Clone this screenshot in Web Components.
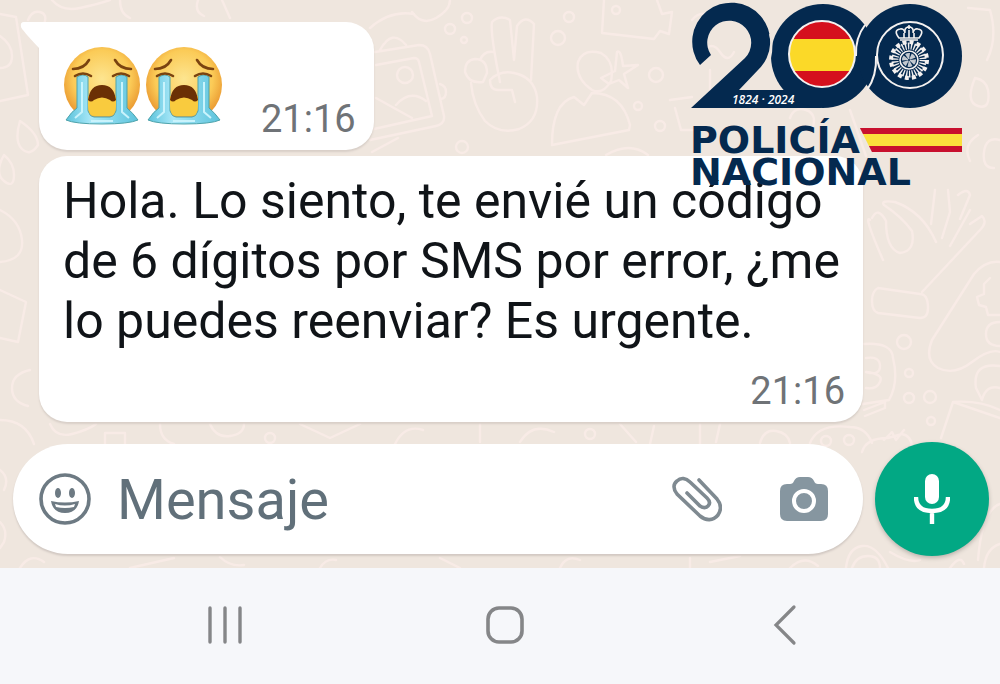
<!DOCTYPE html>
<html lang="es">
<head>
<meta charset="utf-8">
<meta name="viewport" content="width=device-width, initial-scale=1">
<title>Chat</title>
<style>
  body {
    margin: 0;
    font-family: Roboto, "Liberation Sans", sans-serif;
    background: #f6f7fa;
  }
</style>
</head>
<body>
<chat-screen>
  <chat-wallpaper slot="wallpaper"></chat-wallpaper>
  <chat-bubble tail time="21:16"><crying-face></crying-face><crying-face></crying-face></chat-bubble>
  <chat-bubble wide time="21:16">Hola. Lo siento, te envié un código de 6 dígitos por SMS por error, ¿me lo puedes reenviar? Es urgente.</chat-bubble>
  <police-logo slot="logo"></police-logo>
  <message-bar slot="composer" placeholder="Mensaje"></message-bar>
  <system-nav slot="nav"></system-nav>
</chat-screen>

<script>
class ChatScreen extends HTMLElement {
  constructor() {
    super();
    const shadowRoot = this.attachShadow({ mode: 'open' });
    shadowRoot.innerHTML = `
      <style>
      :host {
        display: flex;
        flex-direction: column;
        min-height: 100vh;
      }
      main {
        position: relative;
        flex: 1;
        display: flex;
        flex-direction: column;
        justify-content: space-between;
        gap: 20px;
        padding: 22px 11px 12px 13px;
        box-sizing: border-box;
        background: #efe6de;
        overflow: hidden;
      }
      .messages {
        position: relative;
        display: flex;
        flex-direction: column;
        align-items: flex-start;
        gap: 6px;
        padding: 0 126px 0 26px;
      }
      ::slotted([slot="wallpaper"]) {
        position: absolute;
        inset: 0;
      }
      ::slotted([slot="logo"]) {
        position: absolute;
        top: 2px;
        right: 38px;
      }
      </style>
      <main>
        <slot name="wallpaper"></slot>
        <div class="messages"><slot></slot></div>
        <slot name="logo"></slot>
        <slot name="composer"></slot>
      </main>
      <slot name="nav"></slot>
    `
  }
}

class ChatWallpaper extends HTMLElement {
  constructor() {
    super();
    const shadowRoot = this.attachShadow({ mode: 'open' });
    shadowRoot.innerHTML = `
      <style>
      :host { display: block; }
      svg { display: block; width: 100%; height: 100%; }
      </style>
      <svg viewBox="0 0 1000 568" preserveAspectRatio="xMidYMin slice" fill="none" stroke="#f8ebe6" stroke-width="2.4" stroke-linecap="round" stroke-linejoin="round" aria-hidden="true">
        <!-- left edge -->
        <path d="M0 14 16 17 28 95 0 101M0 36q12 8 12 20t-12 12M28 20q4-10 12-8t4 12M52 0q10 12 28 8t30-8M120 0q0 14 10 18M198 0q-4 12 6 16M222 0l8 18"/>
        <path d="M20 121q-6 20 2 28t16-4q0-12-18-24zM4 155q-10 18 0 26t10-6q0-12-10-20zM0 210q20 10 22 30T0 262M0 290l26 12-8 40-18-4M30 370q-18 4-18 18t16 18M0 420q26 0 34 24M0 470q10 8 4 20M0 522q8 8 4 20l-4 6"/>
        <!-- picture card, hand, contact, camera -->
        <path d="M370 28q20-18 44-14M412 12q10 14 24 6t14-18M375 52l44-7q9 0 11 9l14 62q1 8-8 10l-66 14M376 65l38-7q4 0 5 4l13 54-58 13M376 98l36 20M396 105q14-16 30-4M440 84q6 2 6 8t-5 7M380 50q12-22 26-5M372 152l26-14"/>
        <circle cx="405" cy="75" r="8"/>
        <path d="M500 82q-10-50-8-60 8-8 18-2l4 40 3-34q8-12 17-2l-3 56M490 80q10-10 24-7 20 4 23 24 2 24-18 32-20 6-34-8-12-16-14-38M490 80q0 10 8 10h14l3 12M483 82q-14 2-18-10 0-12 10-13 12 0 12 14l-4 9M480 60q4-10 14-8"/>
        <path d="M592 90q-17-12-14-28 5-14 23-9 14 8 10 28-8 14-19 9zM552 145q0-42 22-48l10 8 8-12q30 0 38 32l-1 5zM617 52q4-3 6 14l15-1-14 9 4 14-9-8-10 4-8-6 14-7zM604 0l-2 33 52 6 6-8 9 3 3-22-10 2-5-14"/>
        <circle cx="467" cy="18" r="5"/><circle cx="450" cy="29" r="5"/><circle cx="464" cy="40" r="3"/>
        <circle cx="569" cy="17" r="5"/><circle cx="558" cy="38" r="7"/><circle cx="616" cy="10" r="4"/>
        <circle cx="656" cy="75" r="7"/><circle cx="638" cy="106" r="4"/><circle cx="660" cy="126" r="5"/><circle cx="462" cy="147" r="6"/>
        <path d="M606 155q24-14 42 0M670 100l22-3M675 108l6 22h12"/>
        <!-- around the logo -->
        <path d="M692 20q8-10 18-4M702 52q10-12 18 0t14 0M710 70v24M850 110l16 46M790 118q4-12 16-8t6 20M968 8l22 2q8 28-3 50M975 78q-10 24 3 28t10-16q-2-10-13-12M978 135q-16 10-8 26M1000 140q-14-4-16 12t10 16"/>
        <!-- arm and gamepad -->
        <path d="M883 260q-20-46-13-40M872 218q6-12 14 3 0 28 14 32 16-2 12-22-10-14-28-26Q880 200 895 202q28 10 41 40M935 190l-4 34M948 190l2 22-8 26M958 195q10-8 12 0l-10 24M970 224l12-8q6 6-2 14L922 292M950 246l20-36M878 288l42 6q8 0 8 14 0 10-8 10l-42-5q-6-2-6-12t6-13z"/>
        <path d="M1000 262q-14-2-26 12l-42 66q-8 20 6 28 16 8 34-6t28-10M990 278l-6 6v10l-7 3 2 8 7 2 2 8h12M1000 322q-14 0-14 12t14 12M1000 366q-28-4-24 22l6 12q4-16 18-12"/>
        <path d="M864 344q28-2 29 14 6 24-4 42l-26 4M866 358q14-2 14 8t-14 6q18 2 14 10t-14 6M864 410l21-8v6l-20 8M953 402l47 16M953 402l-12 36M953 402q26-2 47 8M862 452q4-14 26-14l14-4q10 2 10 14M884 440l8-8 4 8 8-10"/>
        <circle cx="904" cy="342" r="7"/><circle cx="909" cy="373" r="4"/><circle cx="909" cy="398" r="5"/><circle cx="930" cy="397" r="6"/><circle cx="931" cy="421" r="4"/>
        <!-- strip around the message box -->
        <path d="M50 424q6 14 22 10t24-10M105 445v-12h20v12M160 424q0 16 14 20M210 424q6 14 20 12t14-12M300 424l30 14 30-14M395 444q10-20 28-14M480 424v18M520 442q12-20 34-10M620 424l16 18M650 444l4-18M700 424v20M716 442l4-18M760 443q4-14 16-12t14 12M810 443q8-20 40-16 16 0 22 16"/>
        <circle cx="826" cy="441" r="5"/><circle cx="849" cy="440" r="5"/><circle cx="270" cy="438" r="5"/><circle cx="590" cy="434" r="5"/>
        <path d="M20 568q10-16 24-6M130 568l44-10M220 557q10 10 24 8M320 568q6-10 16-8M440 558l20 10M560 568q6-14 20-8M690 558v10M710 562l30-6M790 568q14-14 28-2M846 568q2-20 16-22t26 22M852 568q4-12 16-12t12 12M890 552q20 12 30 8M950 568q10-14 14-4M978 560q4-50 22-56M984 568q2-20 16-24"/>
      </svg>
    `
  }
}

class ChatBubble extends HTMLElement {
  static get observedAttributes() { return ['time'] }

  constructor() {
    super();
    const shadowRoot = this.attachShadow({ mode: 'open' });
    shadowRoot.innerHTML = `
      <style>
      :host {
        position: relative;
        display: flex;
        align-items: flex-end;
        gap: 38px;
        padding: 24px 18px 8px 24px;
        border-radius: 28px;
        box-sizing: border-box;
        background: #fff;
        box-shadow: 0 2px 2px #d8cfc8;
        color: #101418;
      }
      :host([wide]) {
        flex-direction: column;
        gap: 17px;
        align-self: stretch;
        padding: 15px 18px 8px 24px;
      }
      .content {
        display: flex;
        gap: 4px;
        padding-bottom: 16px;
      }
      :host([wide]) .content {
        display: block;
        align-self: stretch;
        padding: 0;
        font-size: 50px;
        line-height: 60px;
      }
      time {
        color: #6f7377;
        font-size: 38px;
        line-height: 46px;
      }
      .tail { display: none; }
      :host([tail]) { border-top-left-radius: 0; }
      :host([tail]) .tail {
        display: block;
        position: absolute;
        left: -20px;
        top: 0;
      }
      </style>
      <svg class="tail" width="24" height="32" viewBox="0 0 24 32" aria-hidden="true"><path d="M24 0H5Q1 0 2 5 3 8 20 26L24 30Z" fill="#fff"/></svg>
      <div class="content"><slot></slot></div>
      <time id="time"></time>
    `
  }

  attributeChangedCallback(name, oldValue, newValue) {
    if(name === 'time') {
      this.shadowRoot.getElementById('time').textContent = newValue;
    }
  }
}

class CryingFace extends HTMLElement {
  constructor() {
    super();
    const shadowRoot = this.attachShadow({ mode: 'open' });
    shadowRoot.innerHTML = `
      <style>
      :host { display: block; }
      svg { display: block; }
      </style>
      <svg width="78" height="80" viewBox="0 0 78 80" role="img" aria-label="Cara llorando">
        <defs>
          <radialGradient id="skin" cx=".5" cy=".42" r=".58">
            <stop offset="0" stop-color="#fde590"/>
            <stop offset=".65" stop-color="#fbcb57"/>
            <stop offset="1" stop-color="#e8932c"/>
          </radialGradient>
          <linearGradient id="tear" x1="0" x2="1">
            <stop offset="0" stop-color="#5cc3dc"/>
            <stop offset=".35" stop-color="#a9e8f8"/>
            <stop offset="1" stop-color="#5cc3dc"/>
          </linearGradient>
        </defs>
        <circle cx="39" cy="39" r="38" fill="url(#skin)"/>
        <path d="M3 74q6-9 11-12V31q6-4 11 0v34q2 6 6 6h16q4 0 6-6V31q6-4 11 0v31q6 5 11 12-9 4-36 4T3 74z" fill="url(#tear)" stroke="#4fa3ab" stroke-width="1"/>
        <path d="M25 60q0 10 7 10h14q7 0 7-10V50H25z" fill="#f9cb3e"/>
        <path d="M19 36v30l-7 6M59 36v30l7 6M28 75h22" fill="none" stroke="#c9f3fc" stroke-width="2"/>
        <path d="M25 54q2-15 14-15t14 15q-3 3-6 0-8-5-16 0-3 3-6 0z" fill="#6b3005"/>
        <path d="M10 23q11 0 16-9M52 14q5 9 16 9M12 30q8-5 16 0M50 30q8-5 16 0" fill="none" stroke="#7a4310" stroke-width="2.6" stroke-linecap="round"/>
      </svg>
    `
  }
}

class PoliceLogo extends HTMLElement {
  constructor() {
    super();
    const shadowRoot = this.attachShadow({ mode: 'open' });
    shadowRoot.innerHTML = `
      <style>
      :host {
        display: block;
        width: 272px;
        color: #04294f;
      }
      svg { display: block; }
      .name {
        margin-top: 16px;
        font: bold 38px/32px "DejaVu Sans", sans-serif;
      }
      .line {
        display: flex;
        align-items: center;
      }
      .flag {
        flex: 1;
        height: 24px;
        background: linear-gradient(#c8102e 0 6px, #fbe03c 6px 18px, #c8102e 18px);
        clip-path: polygon(0 0, 100% 0, 100% 100%, 12px 100%);
      }
      </style>
      <svg width="272" height="106" viewBox="690 2 272 106">
        <path fill="#04294f" d="M691 108 745 58A22 22 0 1 0 711 55L700 65A39 39 0 1 1 758 70L739 90H790L822 108Z"/>
        <circle cx="823" cy="56" r="52" fill="#04294f"/>
        <circle cx="910" cy="56" r="52" fill="#04294f"/>
        <path d="M770 34Q773 45 770 58" fill="none" stroke="#efe6de" stroke-width="2"/>
        <path d="M865 25Q855 38 856 56M876 56Q877 76 867 90" fill="none" stroke="#f4f1f0" stroke-width="2"/>
        <clipPath id="disk"><circle cx="822" cy="54" r="33"/></clipPath>
        <g clip-path="url(#disk)">
          <path fill="#d5101d" d="M788 20h68v68h-68z"/>
          <path fill="#fbd928" d="M788 39h68v32h-68z"/>
        </g>
        <g fill="none" stroke="#f4f1f0">
          <circle cx="822" cy="54" r="33" stroke-width="2"/>
          <circle cx="910" cy="55" r="33" stroke-width="2"/>
          <circle cx="909" cy="60" r="14" stroke-width="7" stroke-dasharray="1.4 1.53"/>
          <circle cx="909" cy="60" r="18" stroke-width="4" stroke-dasharray="4 3.07"/>
          <circle cx="909" cy="60" r="9" stroke-width="1.6"/>
          <circle cx="909" cy="60" r="4" stroke-width="6" stroke-dasharray="3 1" opacity=".8"/>
          <path d="M899 38q-6-8 1-9 4-1 5 4-1-6 4-6t4 6q1-5 5-4 7 1 1 9zM909 25v4M907 27h4M900 40h18M909 30v8M904 33v5M914 33v5" stroke-width="1.6"/>
        </g>
        <text x="732" y="104" fill="#fff" font-family="Open Sans, sans-serif" font-size="12" font-style="italic" font-weight="600">1824 · 2024</text>
      </svg>
      <div class="name">
        <div class="line"><span>POLICÍA</span><span class="flag"></span></div>
        <div class="line">NACIONAL</div>
      </div>
    `
  }
}

class MessageBar extends HTMLElement {
  static get observedAttributes() { return ['placeholder'] }

  constructor() {
    super();
    const shadowRoot = this.attachShadow({ mode: 'open' });
    shadowRoot.innerHTML = `
      <style>
      :host {
        position: relative;
        display: flex;
        align-items: center;
        gap: 12px;
      }
      .box {
        flex: 1;
        min-width: 0;
        height: 110px;
        display: flex;
        align-items: center;
        gap: 26px;
        padding: 0 35px 0 26px;
        box-sizing: border-box;
        border-radius: 55px;
        background: #fff;
        box-shadow: 0 2px 2px #d2c9c3;
      }
      .actions {
        display: flex;
        align-items: center;
        gap: 58px;
      }
      button {
        padding: 0;
        border: 0;
        background: none;
        cursor: pointer;
      }
      svg { display: block; }
      input {
        flex: 1;
        min-width: 0;
        padding: 2px 0 0;
        border: 0;
        outline: 0;
        background: none;
        color: #101418;
        font: 56px/72px Roboto, "Liberation Sans", sans-serif;
      }
      input::placeholder {
        color: #61707a;
        opacity: 1;
      }
      .mic {
        width: 114px;
        height: 114px;
        display: grid;
        place-items: center;
        border-radius: 50%;
        background: #02a884;
        box-shadow: 0 2px 4px #b9b3ac;
      }
      </style>
      <div class="box">
        <button type="button" aria-label="Emojis">
          <svg width="52" height="52" viewBox="0 0 52 52"><circle cx="26" cy="26" r="24" fill="none" stroke="#6d7a83" stroke-width="3.6"/><ellipse cx="19" cy="20" rx="3" ry="5" fill="#6d7a83"/><ellipse cx="33" cy="20" rx="3" ry="5" fill="#6d7a83"/><path d="M12 28q14 3 28 0-2 12-14 12T12 28z" fill="#6d7a83"/><path d="M16 31q10 3 20 0l-1 3q-9 2-18 0z" fill="#fff"/></svg>
        </button>
        <input id="input" type="text" aria-label="Mensaje">
        <div class="actions">
          <button type="button" aria-label="Adjuntar">
            <svg width="50" height="46" viewBox="0 0 50 46" fill="none" stroke="#7f8a91" stroke-width="3.6" stroke-linecap="round"><path d="M27 4 45 23C49 28 50 33 46 39 41 45 34 45 28 40L5 18C1 13 1 8 5 5 9 1 14 2 18 6L35 22C38 25 38 28 36 30 34 32 31 32 28 30L15 17"/></svg>
          </button>
          <button type="button" aria-label="Cámara">
            <svg width="48" height="46" viewBox="0 0 48 46"><path d="M7 8H10Q13 8 14 5 16 1 20 1H28Q32 1 34 5 35 8 38 8H41Q48 8 48 15V38Q48 45 41 45H7Q0 45 0 38V15Q0 8 7 8Z" fill="#8696a0"/><circle cx="24" cy="25" r="10" fill="none" stroke="#fff" stroke-width="4"/></svg>
          </button>
        </div>
      </div>
      <button class="mic" type="button" aria-label="Grabar audio">
        <svg width="36" height="50" viewBox="0 0 36 50"><rect x="11" y="0" width="14" height="30" rx="7" fill="#fff"/><path d="M2 23Q2 37 18 37T34 23M18 37V50" fill="none" stroke="#fff" stroke-width="4.4"/></svg>
      </button>
    `
  }

  attributeChangedCallback(name, oldValue, newValue) {
    if(name === 'placeholder') {
      this.shadowRoot.getElementById('input').placeholder = newValue;
    }
  }
}

class SystemNav extends HTMLElement {
  constructor() {
    super();
    const shadowRoot = this.attachShadow({ mode: 'open' });
    shadowRoot.innerHTML = `
      <style>
      :host { display: block; }
      nav {
        display: grid;
        grid-template-columns: repeat(3, 1fr);
        place-items: center;
        padding: 36px 75px 38px 85px;
        background: #f6f7fa;
      }
      button {
        padding: 0;
        border: 0;
        background: none;
        cursor: pointer;
      }
      svg { display: block; }
      </style>
      <nav>
        <button type="button" aria-label="Recientes"><svg width="42" height="42" viewBox="0 0 42 42"><path d="M6 4V38M21 4V38M36 4V38" stroke="#858688" stroke-width="3.4" stroke-linecap="round"/></svg></button>
        <button type="button" aria-label="Inicio"><svg width="42" height="42" viewBox="0 0 42 42"><rect x="4" y="4" width="34" height="34" rx="11" fill="none" stroke="#858688" stroke-width="3.6"/></svg></button>
        <button type="button" aria-label="Atrás"><svg width="42" height="42" viewBox="0 0 42 42"><path d="M30 3 12 21 30 39" fill="none" stroke="#858688" stroke-width="3.2" stroke-linecap="round"/></svg></button>
      </nav>
    `
  }
}

customElements.define('chat-screen', ChatScreen);
customElements.define('chat-wallpaper', ChatWallpaper);
customElements.define('chat-bubble', ChatBubble);
customElements.define('crying-face', CryingFace);
customElements.define('police-logo', PoliceLogo);
customElements.define('message-bar', MessageBar);
customElements.define('system-nav', SystemNav);
</script>
</body>
</html>
